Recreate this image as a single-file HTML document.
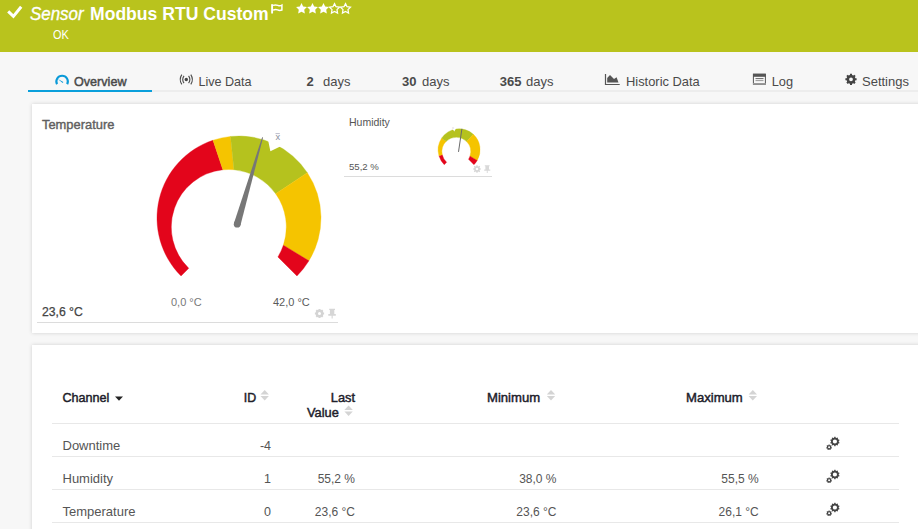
<!DOCTYPE html>
<html><head><meta charset="utf-8"><style>
html,body{margin:0;padding:0;width:918px;height:529px;overflow:hidden;background:#f7f7f7;font-family:"Liberation Sans",sans-serif;}
.t{position:absolute;line-height:0;white-space:nowrap;}
.panel{position:absolute;background:#fff;box-shadow:0 0 4px rgba(0,0,0,0.16);}
svg{position:absolute;left:0;top:0;}
</style></head><body>
<div style="position:absolute;left:0;top:0;width:918px;height:52px;background:#b9c31d;"></div>
<div style="position:absolute;left:28px;top:90px;width:890px;height:2px;background:#ededed;"></div>
<div style="position:absolute;left:28px;top:90px;width:124px;height:2px;background:#0a9fdb;"></div>
<div class="panel" style="left:32px;top:104px;width:900px;height:229px;"></div>
<div class="panel" style="left:32px;top:345px;width:900px;height:220px;"></div>
<div class="t" style="left:30px;top:13.60px;font-size:17.6px;font-weight:normal;color:#fff;font-style:italic;transform:scaleX(0.96);transform-origin:0 0;-webkit-text-stroke:0.35px #fff;">Sensor</div>
<div class="t" style="left:90px;top:14.22px;font-size:19px;font-weight:bold;color:#fff;font-style:normal;transform:scaleX(0.925);transform-origin:0 0;">Modbus RTU Custom</div>
<div class="t" style="left:53px;top:34.77px;font-size:12.2px;font-weight:normal;color:#fff;font-style:normal;transform:scaleX(0.9);transform-origin:0 0;">OK</div>
<div class="t" style="left:74px;top:81.63px;font-size:12.6px;font-weight:normal;color:#4a4a4a;font-style:normal;-webkit-text-stroke:0.45px #4a4a4a;">Overview</div>
<div class="t" style="left:198.4px;top:81.63px;font-size:12.6px;font-weight:normal;color:#4a4a4a;font-style:normal;">Live Data</div>
<div class="t" style="left:306.6px;top:81.50px;font-size:13px;font-weight:bold;color:#4a4a4a;font-style:normal;">2</div>
<div class="t" style="left:323px;top:81.50px;font-size:13px;font-weight:normal;color:#4a4a4a;font-style:normal;">days</div>
<div class="t" style="left:402px;top:81.50px;font-size:13px;font-weight:bold;color:#4a4a4a;font-style:normal;">30</div>
<div class="t" style="left:422px;top:81.50px;font-size:13px;font-weight:normal;color:#4a4a4a;font-style:normal;">days</div>
<div class="t" style="left:499.7px;top:81.50px;font-size:13px;font-weight:bold;color:#4a4a4a;font-style:normal;">365</div>
<div class="t" style="left:526px;top:81.50px;font-size:13px;font-weight:normal;color:#4a4a4a;font-style:normal;">days</div>
<div class="t" style="left:626px;top:81.53px;font-size:12.9px;font-weight:normal;color:#4a4a4a;font-style:normal;">Historic Data</div>
<div class="t" style="left:771.7px;top:81.56px;font-size:12.8px;font-weight:normal;color:#4a4a4a;font-style:normal;">Log</div>
<div class="t" style="left:862px;top:81.50px;font-size:13px;font-weight:normal;color:#4a4a4a;font-style:normal;">Settings</div>
<div class="t" style="left:42px;top:124.53px;font-size:12.9px;font-weight:normal;color:#606060;font-style:normal;-webkit-text-stroke:0.4px #606060;">Temperature</div>
<div class="t" style="left:171px;top:302.19px;font-size:11px;font-weight:normal;color:#787878;font-style:normal;">0,0 °C</div>
<div class="t" style="left:273px;top:302.19px;font-size:11px;font-weight:normal;color:#5a5a5a;font-style:normal;">42,0 °C</div>
<div class="t" style="left:42px;top:311.77px;font-size:12.2px;font-weight:normal;color:#444;font-style:normal;-webkit-text-stroke:0.25px #444;">23,6 °C</div>
<div style="position:absolute;left:37px;top:322px;width:301px;height:1px;background:#dcdcdc;"></div>
<div class="t" style="left:349px;top:122.36px;font-size:10.5px;font-weight:normal;color:#555;font-style:normal;">Humidity</div>
<div class="t" style="left:349px;top:166.67px;font-size:9.6px;font-weight:normal;color:#555;font-style:normal;">55,2 %</div>
<div style="position:absolute;left:344px;top:176px;width:148px;height:1px;background:#dcdcdc;"></div>
<div class="t" style="left:62.5px;top:397.63px;font-size:12.6px;font-weight:normal;color:#20202a;font-style:normal;-webkit-text-stroke:0.45px #20202a;">Channel</div>
<div class="t" style="left:243.7px;top:397.70px;font-size:12.4px;font-weight:normal;color:#20202a;font-style:normal;-webkit-text-stroke:0.45px #20202a;">ID</div>
<div class="t" style="right:563px;top:397.56px;font-size:12.8px;font-weight:normal;color:#20202a;font-style:normal;-webkit-text-stroke:0.45px #20202a;">Last</div>
<div class="t" style="left:307px;top:412.56px;font-size:12.8px;font-weight:normal;color:#20202a;font-style:normal;-webkit-text-stroke:0.45px #20202a;">Value</div>
<div class="t" style="left:487px;top:397.96px;font-size:13.1px;font-weight:normal;color:#20202a;font-style:normal;-webkit-text-stroke:0.45px #20202a;">Minimum</div>
<div class="t" style="left:686px;top:397.96px;font-size:13.1px;font-weight:normal;color:#20202a;font-style:normal;-webkit-text-stroke:0.45px #20202a;">Maximum</div>
<div style="position:absolute;left:52px;top:423px;width:847px;height:1px;background:#e8e8e8;"></div>
<div style="position:absolute;left:52px;top:456px;width:847px;height:1px;background:#e8e8e8;"></div>
<div style="position:absolute;left:52px;top:489px;width:847px;height:1px;background:#e8e8e8;"></div>
<div style="position:absolute;left:52px;top:522px;width:847px;height:1px;background:#e8e8e8;"></div>
<div class="t" style="left:62.5px;top:445.50px;font-size:13px;font-weight:normal;color:#555;font-style:normal;">Downtime</div>
<div class="t" style="right:647px;top:445.67px;font-size:12.5px;font-weight:normal;color:#555;font-style:normal;">-4</div>
<div class="t" style="left:62.5px;top:478.50px;font-size:13px;font-weight:normal;color:#555;font-style:normal;">Humidity</div>
<div class="t" style="right:647px;top:478.67px;font-size:12.5px;font-weight:normal;color:#555;font-style:normal;">1</div>
<div class="t" style="right:563px;top:478.84px;font-size:12px;font-weight:normal;color:#555;font-style:normal;">55,2 %</div>
<div class="t" style="right:361.5px;top:478.84px;font-size:12px;font-weight:normal;color:#555;font-style:normal;">38,0 %</div>
<div class="t" style="right:159.29999999999995px;top:478.84px;font-size:12px;font-weight:normal;color:#555;font-style:normal;">55,5 %</div>
<div class="t" style="left:62.5px;top:511.50px;font-size:13px;font-weight:normal;color:#555;font-style:normal;">Temperature</div>
<div class="t" style="right:647px;top:511.67px;font-size:12.5px;font-weight:normal;color:#555;font-style:normal;">0</div>
<div class="t" style="right:563px;top:511.84px;font-size:12px;font-weight:normal;color:#555;font-style:normal;">23,6 °C</div>
<div class="t" style="right:361.5px;top:511.84px;font-size:12px;font-weight:normal;color:#555;font-style:normal;">23,6 °C</div>
<div class="t" style="right:159.29999999999995px;top:511.84px;font-size:12px;font-weight:normal;color:#555;font-style:normal;">26,1 °C</div>
<svg width="918" height="529" viewBox="0 0 918 529">
<polyline points="8.2,11.4 13.4,16.4 21.2,6.8" fill="none" stroke="#fff" stroke-width="3"/>
<path d="M272.1,4.2 V13.5" stroke="#fff" stroke-width="1.9"/><path d="M273,5.4 Q275.5,4.4 277.8,5.4 T281.9,5.2 V10 Q279.6,10.9 277.6,9.9 T273,10.2" fill="none" stroke="#fff" stroke-width="1.5"/>
<polygon points="301.50,3.10 303.18,6.49 306.92,7.04 304.21,9.68 304.85,13.41 301.50,11.65 298.15,13.41 298.79,9.68 296.08,7.04 299.82,6.49" fill="#fff"/>
<polygon points="312.50,3.10 314.18,6.49 317.92,7.04 315.21,9.68 315.85,13.41 312.50,11.65 309.15,13.41 309.79,9.68 307.08,7.04 310.82,6.49" fill="#fff"/>
<polygon points="323.50,3.10 325.18,6.49 328.92,7.04 326.21,9.68 326.85,13.41 323.50,11.65 320.15,13.41 320.79,9.68 318.08,7.04 321.82,6.49" fill="#fff"/>
<polygon points="334.50,3.60 336.03,6.70 339.45,7.19 336.97,9.60 337.56,13.01 334.50,11.40 331.44,13.01 332.03,9.60 329.55,7.19 332.97,6.70" fill="none" stroke="#fff" stroke-width="1.25"/>
<polygon points="345.50,3.60 347.03,6.70 350.45,7.19 347.97,9.60 348.56,13.01 345.50,11.40 342.44,13.01 343.03,9.60 340.55,7.19 343.97,6.70" fill="none" stroke="#fff" stroke-width="1.25"/>
<path d="M57.0,84.2 A5.75,5.75 0 1 1 67.2,84.2" fill="none" stroke="#0a9ad8" stroke-width="2.1"/>
<path d="M57.8,79 L63.4,82.1 L62.7,83.1 Z" fill="#0a9ad8"/>
<g fill="none" stroke="#4a4a4a" stroke-width="1.1"><path d="M181.8,74.6 A9,9 0 0 0 181.8,84.4"/><path d="M184,75.9 A6.2,6.2 0 0 0 184,83.1"/><path d="M190.8,74.6 A9,9 0 0 1 190.8,84.4"/><path d="M188.6,75.9 A6.2,6.2 0 0 1 188.6,83.1"/></g><circle cx="186.3" cy="79.5" r="1.7" fill="#444"/>
<path d="M605.5,74 V84.5 H619.7" fill="none" stroke="#555" stroke-width="1.2"/><path d="M607.2,82.5 V78 L610,74.9 L614,79 L616.6,77.2 L618.5,82.5 Z" fill="#555"/>
<rect x="753.4" y="74.2" width="12" height="10" fill="none" stroke="#555" stroke-width="1"/><rect x="753" y="73.8" width="12.8" height="3" fill="#555"/><line x1="755.5" y1="78.6" x2="763.5" y2="78.6" stroke="#666" stroke-width="1"/><line x1="755.5" y1="80.6" x2="763.5" y2="80.6" stroke="#999" stroke-width="1"/><rect x="753" y="83" width="12.8" height="1.5" fill="#999"/>
<path d="M849.95,74.92 L850.02,73.68 L851.98,73.68 L852.05,74.92 L853.35,75.46 L854.28,74.64 L855.66,76.02 L854.84,76.95 L855.38,78.25 L856.62,78.32 L856.62,80.28 L855.38,80.35 L854.84,81.65 L855.66,82.58 L854.28,83.96 L853.35,83.14 L852.05,83.68 L851.98,84.92 L850.02,84.92 L849.95,83.68 L848.65,83.14 L847.72,83.96 L846.34,82.58 L847.16,81.65 L846.62,80.35 L845.38,80.28 L845.38,78.32 L846.62,78.25 L847.16,76.95 L846.34,76.02 L847.72,74.64 L848.65,75.46 Z M852.9,79.3 A1.9,1.9 0 1 0 849.1,79.3 A1.9,1.9 0 1 0 852.9,79.3 Z" fill="#444" fill-rule="evenodd"/>
<path d="M318.44,309.75 L318.58,308.89 L320.42,308.89 L320.56,309.75 L321.41,310.10 L322.11,309.59 L323.41,310.89 L322.90,311.59 L323.25,312.44 L324.11,312.58 L324.11,314.42 L323.25,314.56 L322.90,315.41 L323.41,316.11 L322.11,317.41 L321.41,316.90 L320.56,317.25 L320.42,318.11 L318.58,318.11 L318.44,317.25 L317.59,316.90 L316.89,317.41 L315.59,316.11 L316.10,315.41 L315.75,314.56 L314.89,314.42 L314.89,312.58 L315.75,312.44 L316.10,311.59 L315.59,310.89 L316.89,309.59 L317.59,310.10 Z M321.0,313.5 A1.5,1.5 0 1 0 318.0,313.5 A1.5,1.5 0 1 0 321.0,313.5 Z" fill="#d4d4d4" fill-rule="evenodd"/>
<path d="M329.2,308.8 H335 V310 H334.3 V314 H335.8 V315.7 H332.7 V318.6 H331.6 V315.7 H328.3 V314 H329.9 V310 H329.2 Z" fill="#d6d6d6"/>
<path d="M476.28,166.19 L476.39,165.15 L477.61,165.15 L477.72,166.19 L478.48,166.50 L479.29,165.84 L480.16,166.71 L479.50,167.52 L479.81,168.28 L480.85,168.39 L480.85,169.61 L479.81,169.72 L479.50,170.48 L480.16,171.29 L479.29,172.16 L478.48,171.50 L477.72,171.81 L477.61,172.85 L476.39,172.85 L476.28,171.81 L475.52,171.50 L474.71,172.16 L473.84,171.29 L474.50,170.48 L474.19,169.72 L473.15,169.61 L473.15,168.39 L474.19,168.28 L474.50,167.52 L473.84,166.71 L474.71,165.84 L475.52,166.50 Z M478.3,169 A1.3,1.3 0 1 0 475.7,169 A1.3,1.3 0 1 0 478.3,169 Z" fill="#d5d5d5" fill-rule="evenodd"/>
<path d="M484.8,165.3 H489.6 V166.2 H489 V169.4 H490.3 V170.8 H487.7 V173 H486.8 V170.8 H484.2 V169.4 H485.4 V166.2 H484.8 Z" fill="#d9d9d9"/>
<path d="M181.02,275.98 A82,82 0 0 1 212.99,140.24 L222.88,169.81 A57.5,57.5 0 0 0 188.75,268.25 Z" fill="#e3051b" stroke="#e3051b" stroke-width="0.35"/>
<path d="M212.99,140.24 A82,82 0 0 1 230.51,136.44 L233.98,169.73 A57.5,57.5 0 0 0 222.88,169.81 Z" fill="#f5c400" stroke="#f5c400" stroke-width="0.35"/>
<path d="M230.51,136.44 A82,82 0 0 1 307.32,172.66 L275.66,193.67 A57.5,57.5 0 0 0 233.98,169.73 Z" fill="#b5c21e" stroke="#b5c21e" stroke-width="0.35"/>
<path d="M307.32,172.66 A82,82 0 0 1 308.92,260.84 L283.35,245.18 A57.5,57.5 0 0 0 275.66,193.67 Z" fill="#f5c400" stroke="#f5c400" stroke-width="0.35"/>
<path d="M308.92,260.84 A82,82 0 0 1 296.98,275.98 L277.91,256.91 A57.5,57.5 0 0 0 283.35,245.18 Z" fill="#e3051b" stroke="#e3051b" stroke-width="0.35"/>
<polygon points="268.2,140.8 270.4,151.3 280.2,146.4 282,134 266,134" fill="#fff"/>
<polygon points="240.46,225.15 263.08,137.54 262.12,137.26 233.94,223.25" fill="#777"/><circle cx="237.2" cy="224.2" r="3.4" fill="#777"/>
<text x="275.5" y="140.2" font-size="9.3" fill="#8a8fa0" style="font-family:'Liberation Sans'">x</text><line x1="275.5" y1="133.6" x2="279.8" y2="133.6" stroke="#aab" stroke-width="0.8"/>
<path d="M444.25,164.65 A21,21 0 0 1 438.95,155.72 L442.25,154.75 A14.4,14.4 0 0 0 446.63,162.27 Z" fill="#e3051b" stroke="#e3051b" stroke-width="0.35"/>
<path d="M438.95,155.72 A21,21 0 0 1 441.60,138.19 L446.26,141.28 A14.4,14.4 0 0 0 442.25,154.75 Z" fill="#f5c400" stroke="#f5c400" stroke-width="0.35"/>
<path d="M441.60,138.19 A21,21 0 0 1 473.33,134.36 L466.66,141.60 A14.4,14.4 0 0 0 446.26,141.28 Z" fill="#b5c21e" stroke="#b5c21e" stroke-width="0.35"/>
<path d="M473.33,134.36 A21,21 0 0 1 477.21,160.43 L469.95,156.17 A14.4,14.4 0 0 0 466.66,141.60 Z" fill="#f5c400" stroke="#f5c400" stroke-width="0.35"/>
<path d="M477.21,160.43 A21,21 0 0 1 473.95,164.65 L468.52,159.22 A14.4,14.4 0 0 0 469.95,156.17 Z" fill="#e3051b" stroke="#e3051b" stroke-width="0.35"/>
<polygon points="452.7,129.2 454.35,131.5 455.8,128.4 455.5,125 452,125" fill="#fff"/><text x="452.3" y="128.6" font-size="3" fill="#c9b8c8" style="font-family:'Liberation Sans'">x</text>
<line x1="458.5" y1="151.9" x2="461.9" y2="128.8" stroke="#6a6a6a" stroke-width="1"/>
<polygon points="115,396.5 123,396.5 119,400.8" fill="#222"/>
<polygon points="260.5,394.4 268.9,394.4 264.7,389.9" fill="#d4d4d4"/><polygon points="260.5,395.9 268.9,395.9 264.7,400.4" fill="#d4d4d4"/>
<polygon points="344.4,409.9 352.79999999999995,409.9 348.59999999999997,405.4" fill="#d4d4d4"/><polygon points="344.4,411.4 352.79999999999995,411.4 348.59999999999997,415.9" fill="#d4d4d4"/>
<polygon points="546.8,394.4 555.1999999999999,394.4 551.0,389.9" fill="#d4d4d4"/><polygon points="546.8,395.9 555.1999999999999,395.9 551.0,400.4" fill="#d4d4d4"/>
<polygon points="748.6,394.4 757.0,394.4 752.8000000000001,389.9" fill="#d4d4d4"/><polygon points="748.6,395.9 757.0,395.9 752.8000000000001,400.4" fill="#d4d4d4"/>
<path d="M834.12,437.68 L834.31,436.84 L835.49,436.84 L835.68,437.68 L836.52,437.95 L837.16,437.38 L838.12,438.07 L837.78,438.87 L838.29,439.58 L839.15,439.50 L839.52,440.62 L838.78,441.06 L838.78,441.94 L839.52,442.38 L839.15,443.50 L838.29,443.42 L837.78,444.13 L838.12,444.93 L837.16,445.62 L836.52,445.05 L835.68,445.32 L835.49,446.16 L834.31,446.16 L834.12,445.32 L833.28,445.05 L832.64,445.62 L831.68,444.93 L832.02,444.13 L831.51,443.42 L830.65,443.50 L830.28,442.38 L831.02,441.94 L831.02,441.06 L830.28,440.62 L830.65,439.50 L831.51,439.58 L832.02,438.87 L831.68,438.07 L832.64,437.38 L833.28,437.95 Z M837.0,441.5 A2.1,2.1 0 1 0 832.8,441.5 A2.1,2.1 0 1 0 837.0,441.5 Z" fill="#444" fill-rule="evenodd"/>
<path d="M828.48,445.19 L828.58,444.45 L829.62,444.45 L829.72,445.19 L830.36,445.50 L831.01,445.12 L831.65,445.93 L831.14,446.47 L831.30,447.16 L832.00,447.43 L831.77,448.44 L831.02,448.38 L830.58,448.93 L830.80,449.65 L829.87,450.10 L829.45,449.47 L828.75,449.47 L828.33,450.10 L827.40,449.65 L827.62,448.93 L827.18,448.38 L826.43,448.44 L826.20,447.43 L826.90,447.16 L827.06,446.47 L826.55,445.93 L827.19,445.12 L827.84,445.50 Z M830.1,447.3 A1.0,1.0 0 1 0 828.1,447.3 A1.0,1.0 0 1 0 830.1,447.3 Z" fill="#444" fill-rule="evenodd"/>
<path d="M834.12,470.68 L834.31,469.84 L835.49,469.84 L835.68,470.68 L836.52,470.95 L837.16,470.38 L838.12,471.07 L837.78,471.87 L838.29,472.58 L839.15,472.50 L839.52,473.62 L838.78,474.06 L838.78,474.94 L839.52,475.38 L839.15,476.50 L838.29,476.42 L837.78,477.13 L838.12,477.93 L837.16,478.62 L836.52,478.05 L835.68,478.32 L835.49,479.16 L834.31,479.16 L834.12,478.32 L833.28,478.05 L832.64,478.62 L831.68,477.93 L832.02,477.13 L831.51,476.42 L830.65,476.50 L830.28,475.38 L831.02,474.94 L831.02,474.06 L830.28,473.62 L830.65,472.50 L831.51,472.58 L832.02,471.87 L831.68,471.07 L832.64,470.38 L833.28,470.95 Z M837.0,474.5 A2.1,2.1 0 1 0 832.8,474.5 A2.1,2.1 0 1 0 837.0,474.5 Z" fill="#444" fill-rule="evenodd"/>
<path d="M828.48,478.19 L828.58,477.45 L829.62,477.45 L829.72,478.19 L830.36,478.50 L831.01,478.12 L831.65,478.93 L831.14,479.47 L831.30,480.16 L832.00,480.43 L831.77,481.44 L831.02,481.38 L830.58,481.93 L830.80,482.65 L829.87,483.10 L829.45,482.47 L828.75,482.47 L828.33,483.10 L827.40,482.65 L827.62,481.93 L827.18,481.38 L826.43,481.44 L826.20,480.43 L826.90,480.16 L827.06,479.47 L826.55,478.93 L827.19,478.12 L827.84,478.50 Z M830.1,480.3 A1.0,1.0 0 1 0 828.1,480.3 A1.0,1.0 0 1 0 830.1,480.3 Z" fill="#444" fill-rule="evenodd"/>
<path d="M834.12,503.68 L834.31,502.84 L835.49,502.84 L835.68,503.68 L836.52,503.95 L837.16,503.38 L838.12,504.07 L837.78,504.87 L838.29,505.58 L839.15,505.50 L839.52,506.62 L838.78,507.06 L838.78,507.94 L839.52,508.38 L839.15,509.50 L838.29,509.42 L837.78,510.13 L838.12,510.93 L837.16,511.62 L836.52,511.05 L835.68,511.32 L835.49,512.16 L834.31,512.16 L834.12,511.32 L833.28,511.05 L832.64,511.62 L831.68,510.93 L832.02,510.13 L831.51,509.42 L830.65,509.50 L830.28,508.38 L831.02,507.94 L831.02,507.06 L830.28,506.62 L830.65,505.50 L831.51,505.58 L832.02,504.87 L831.68,504.07 L832.64,503.38 L833.28,503.95 Z M837.0,507.5 A2.1,2.1 0 1 0 832.8,507.5 A2.1,2.1 0 1 0 837.0,507.5 Z" fill="#444" fill-rule="evenodd"/>
<path d="M828.48,511.19 L828.58,510.45 L829.62,510.45 L829.72,511.19 L830.36,511.50 L831.01,511.12 L831.65,511.93 L831.14,512.47 L831.30,513.16 L832.00,513.43 L831.77,514.44 L831.02,514.38 L830.58,514.93 L830.80,515.65 L829.87,516.10 L829.45,515.47 L828.75,515.47 L828.33,516.10 L827.40,515.65 L827.62,514.93 L827.18,514.38 L826.43,514.44 L826.20,513.43 L826.90,513.16 L827.06,512.47 L826.55,511.93 L827.19,511.12 L827.84,511.50 Z M830.1,513.3 A1.0,1.0 0 1 0 828.1,513.3 A1.0,1.0 0 1 0 830.1,513.3 Z" fill="#444" fill-rule="evenodd"/>
</svg>
</body></html>
